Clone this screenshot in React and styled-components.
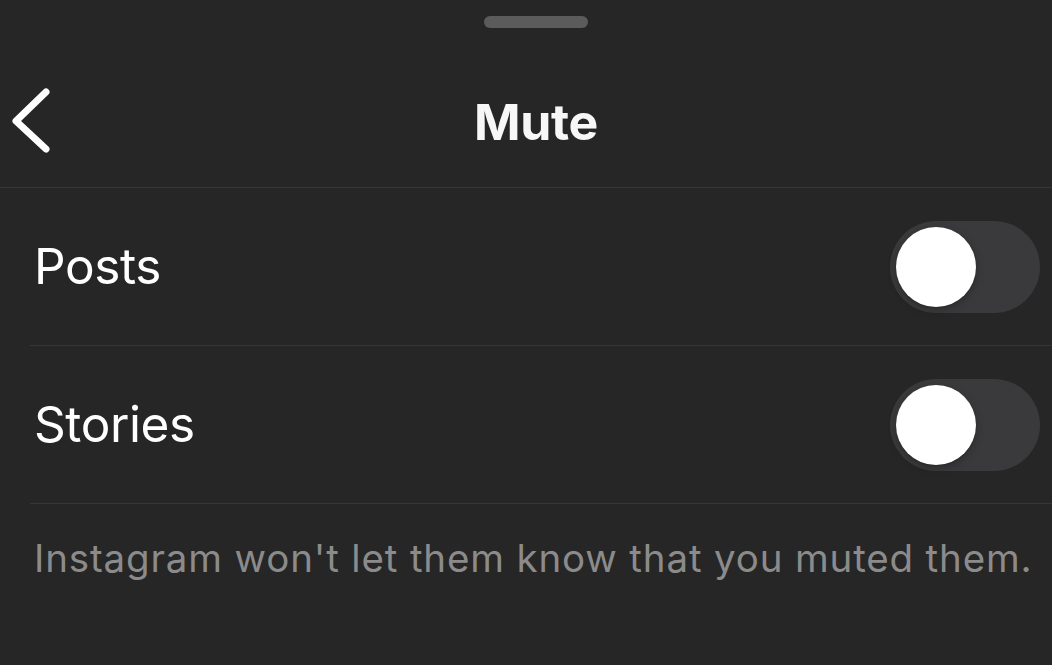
import React from "react";
import styled, { createGlobalStyle } from "styled-components";

const Global = createGlobalStyle`
  html, body { margin: 0; padding: 0; background: #262626; }
  #root { width: 1052px; height: 665px; }
`;

const Sheet = styled.div`
  width: 1052px;
  height: 665px;
  background: #262626;
  display: flex;
  flex-direction: column;
  padding-top: 16px;
  box-sizing: border-box;
  font-family: Inter, "Liberation Sans", sans-serif;
  overflow: hidden;
`;

const Handle = styled.div`
  align-self: center;
  margin-left: 20px;
  width: 104px;
  height: 12px;
  border-radius: 6px;
  background: #5b5b5b;
  flex-shrink: 0;
`;

const Header = styled.div`
  margin-top: 25px;
  height: 134px;
  border-bottom: 1px solid #363636;
  display: grid;
  grid-template-columns: 120px 1fr 100px;
  align-items: center;
  flex-shrink: 0;
`;

const BackButton = styled.button`
  background: none;
  border: 0;
  padding: 0 0 0 9px;
  width: 60px;
  height: 70px;
  display: flex;
  align-items: center;
  cursor: pointer;
`;

const Title = styled.h1`
  margin: 4px 0 0;
  text-align: center;
  color: #f7f7f7;
  font-size: 50px;
  line-height: 1;
  font-weight: 700;
  letter-spacing: -0.3px;
`;

const List = styled.div`
  display: flex;
  flex-direction: column;
  padding-left: 30px;
`;

const Row = styled.div`
  height: 157px;
  border-bottom: 1px solid #363636;
  display: flex;
  align-items: center;
  justify-content: space-between;
  padding-left: 4px;
  padding-right: 12px;
`;

const Label = styled.span`
  color: #ffffff;
  font-size: 49.5px;
  line-height: 1;
  font-weight: 400;
  letter-spacing: -0.4px;
`;

const Track = styled.div`
  width: 150px;
  height: 92px;
  border-radius: 46px;
  background: #3a3a3c;
  display: flex;
  align-items: center;
  justify-content: ${(p) => (p.$on ? "flex-end" : "flex-start")};
  padding: 0 6px;
  box-sizing: border-box;
`;

const Knob = styled.div`
  width: 80px;
  height: 80px;
  border-radius: 50%;
  background: #ffffff;
  box-shadow: 0 3px 8px rgba(0, 0, 0, 0.25), 0 1px 1px rgba(0, 0, 0, 0.16);
`;

const Note = styled.p`
  margin: 0;
  padding: 35px 0 0 34px;
  color: #8b8b8b;
  font-size: 38.5px;
  line-height: 1;
  font-weight: 400;
  letter-spacing: 0.85px;
  white-space: nowrap;
`;

const Toggle = ({ on }) => (
  <Track $on={on}>
    <Knob />
  </Track>
);

export default function App() {
  return (
    <>
      <Global />
      <Sheet>
        <Handle />
        <Header>
          <BackButton aria-label="Back">
            <svg width="44" height="70" viewBox="0 0 44 70">
              <polyline
                points="37,7 7,36 37,64"
                fill="none"
                stroke="#ffffff"
                strokeWidth="7"
                strokeLinecap="round"
                strokeLinejoin="round"
              />
            </svg>
          </BackButton>
          <Title>Mute</Title>
          <div />
        </Header>
        <List>
          <Row>
            <Label>Posts</Label>
            <Toggle />
          </Row>
          <Row>
            <Label>Stories</Label>
            <Toggle />
          </Row>
        </List>
        <Note>Instagram won't let them know that you muted them.</Note>
      </Sheet>
    </>
  );
}
